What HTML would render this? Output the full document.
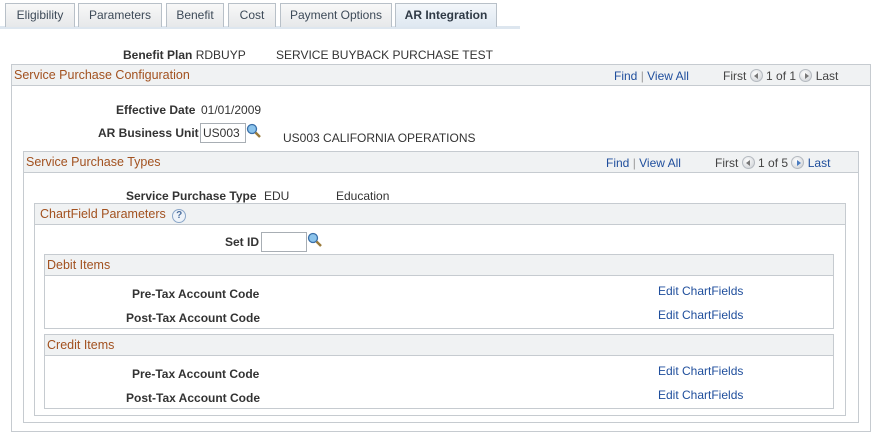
<!DOCTYPE html>
<html><head><style>
*{margin:0;padding:0;box-sizing:border-box}
body{width:876px;height:436px;background:#fff;font-family:"Liberation Sans",Arial,sans-serif;font-size:12px;color:#333;position:relative;overflow:hidden}
.a{position:absolute;white-space:nowrap}
.tab{position:absolute;top:3px;height:24px;border:1px solid #b8c0c8;border-bottom:none;background:linear-gradient(#f8f8f8,#e6e8ea);color:#3d4a58;text-align:center;line-height:23px;font-size:12px}
.tab.act{background:linear-gradient(#f2f6fa,#dfe8f1);font-weight:bold;color:#2f3a46}
.box{position:absolute;border:1px solid #c6cbd0}
.hd{position:absolute;left:0;right:0;top:0;height:21px;background:#f0f2f3;border-bottom:1px solid #c6cbd0;color:#a2511f;font-size:12.5px;line-height:20px;padding-left:2px}
.lbl{font-weight:bold;color:#333}
.lnk{color:#1f4e9c}
.nav{color:#444}
.circ{display:inline-block;width:13px;height:13px;border-radius:50%;background:radial-gradient(circle at 40% 35%,#fff,#c9cdd2);border:1px solid #b5bac0;vertical-align:-2px;position:relative}
.circ.l::after{content:"";position:absolute;left:3px;top:3px;border:3px solid transparent;border-right:4px solid #777;border-left:none}
.circ.r::after{content:"";position:absolute;left:5px;top:3px;border:3px solid transparent;border-left:4px solid #777;border-right:none}
.circ.r.b::after{border-left-color:#4a7cc0}
.inp{position:absolute;border:1px solid #a8aeb4;height:20px;background:#fff;font-size:12px;line-height:18px;padding-left:2px}
</style></head><body>
<div class="a" style="left:0;top:26px;width:520px;height:3px;background:#dde6ef"></div>
<div class="tab" style="left:5px;width:70px">Eligibility</div>
<div class="tab" style="left:78px;width:84px">Parameters</div>
<div class="tab" style="left:166px;width:58px">Benefit</div>
<div class="tab" style="left:228px;width:48px">Cost</div>
<div class="tab" style="left:280px;width:112px">Payment Options</div>
<div class="tab act" style="left:395px;width:102px">AR Integration</div>

<div class="a" style="left:123px;top:48px"><span class="lbl">Benefit Plan</span> RDBUYP</div>
<div class="a" style="left:276px;top:48px">SERVICE BUYBACK PURCHASE TEST</div>

<div class="box" style="left:11px;top:64px;width:860px;height:368px">
 <div class="hd">Service Purchase Configuration</div>
</div>
<div class="a lnk" style="left:614px;top:69px">Find <span style="color:#999">|</span> View All</div>
<div class="a nav" style="left:723px;top:69px">First <span class="circ l"></span> 1 of 1 <span class="circ r"></span> Last</div>

<div class="a lbl" style="left:116px;top:103px">Effective Date</div>
<div class="a" style="left:201px;top:103px">01/01/2009</div>
<div class="a lbl" style="left:98px;top:126px">AR Business Unit</div>
<div class="inp" style="left:200px;top:123px;width:46px">US003</div>
<svg class="a" style="left:246px;top:123px" width="16" height="16" viewBox="0 0 16 16"><circle cx="6" cy="6" r="4.5" fill="#8cc4ec" stroke="#3a6fa8" stroke-width="1.3"/><line x1="9.5" y1="9.5" x2="14" y2="14" stroke="#9a7a3a" stroke-width="2.5"/></svg>
<div class="a" style="left:283px;top:131px">US003 CALIFORNIA OPERATIONS</div>

<div class="box" style="left:23px;top:151px;width:836px;height:272px">
 <div class="hd">Service Purchase Types</div>
</div>
<div class="a lnk" style="left:606px;top:156px">Find <span style="color:#999">|</span> View All</div>
<div class="a nav" style="left:715px;top:156px">First <span class="circ l"></span> 1 of 5 <span class="circ r b"></span> <span class="lnk">Last</span></div>

<div class="a lbl" style="left:126px;top:189px">Service Purchase Type</div>
<div class="a" style="left:264px;top:189px">EDU</div>
<div class="a" style="left:336px;top:189px">Education</div>

<div class="box" style="left:34px;top:203px;width:812px;height:213px">
 <div class="hd" style="padding-left:5px">ChartField Parameters <span style="display:inline-block;width:14px;height:14px;border-radius:50%;border:1px solid #8aa6c8;background:#eef3f9;color:#4b6f9e;font-size:10px;font-weight:bold;line-height:12px;text-align:center;margin-left:3px;vertical-align:0">?</span></div>
</div>
<div class="a lbl" style="left:225px;top:235px">Set ID</div>
<div class="inp" style="left:261px;top:232px;width:46px"></div>
<svg class="a" style="left:307px;top:232px" width="16" height="16" viewBox="0 0 16 16"><circle cx="6" cy="6" r="4.5" fill="#8cc4ec" stroke="#3a6fa8" stroke-width="1.3"/><line x1="9.5" y1="9.5" x2="14" y2="14" stroke="#9a7a3a" stroke-width="2.5"/></svg>

<div class="box" style="left:44px;top:254px;width:790px;height:75px">
 <div class="hd">Debit Items</div>
</div>
<div class="a lbl" style="left:132px;top:287px">Pre-Tax Account Code</div>
<div class="a lbl" style="left:126px;top:311px">Post-Tax Account Code</div>
<div class="a lnk" style="left:658px;top:284px">Edit ChartFields</div>
<div class="a lnk" style="left:658px;top:308px">Edit ChartFields</div>

<div class="box" style="left:44px;top:334px;width:790px;height:75px">
 <div class="hd">Credit Items</div>
</div>
<div class="a lbl" style="left:132px;top:367px">Pre-Tax Account Code</div>
<div class="a lbl" style="left:126px;top:391px">Post-Tax Account Code</div>
<div class="a lnk" style="left:658px;top:364px">Edit ChartFields</div>
<div class="a lnk" style="left:658px;top:388px">Edit ChartFields</div>
</body></html>
